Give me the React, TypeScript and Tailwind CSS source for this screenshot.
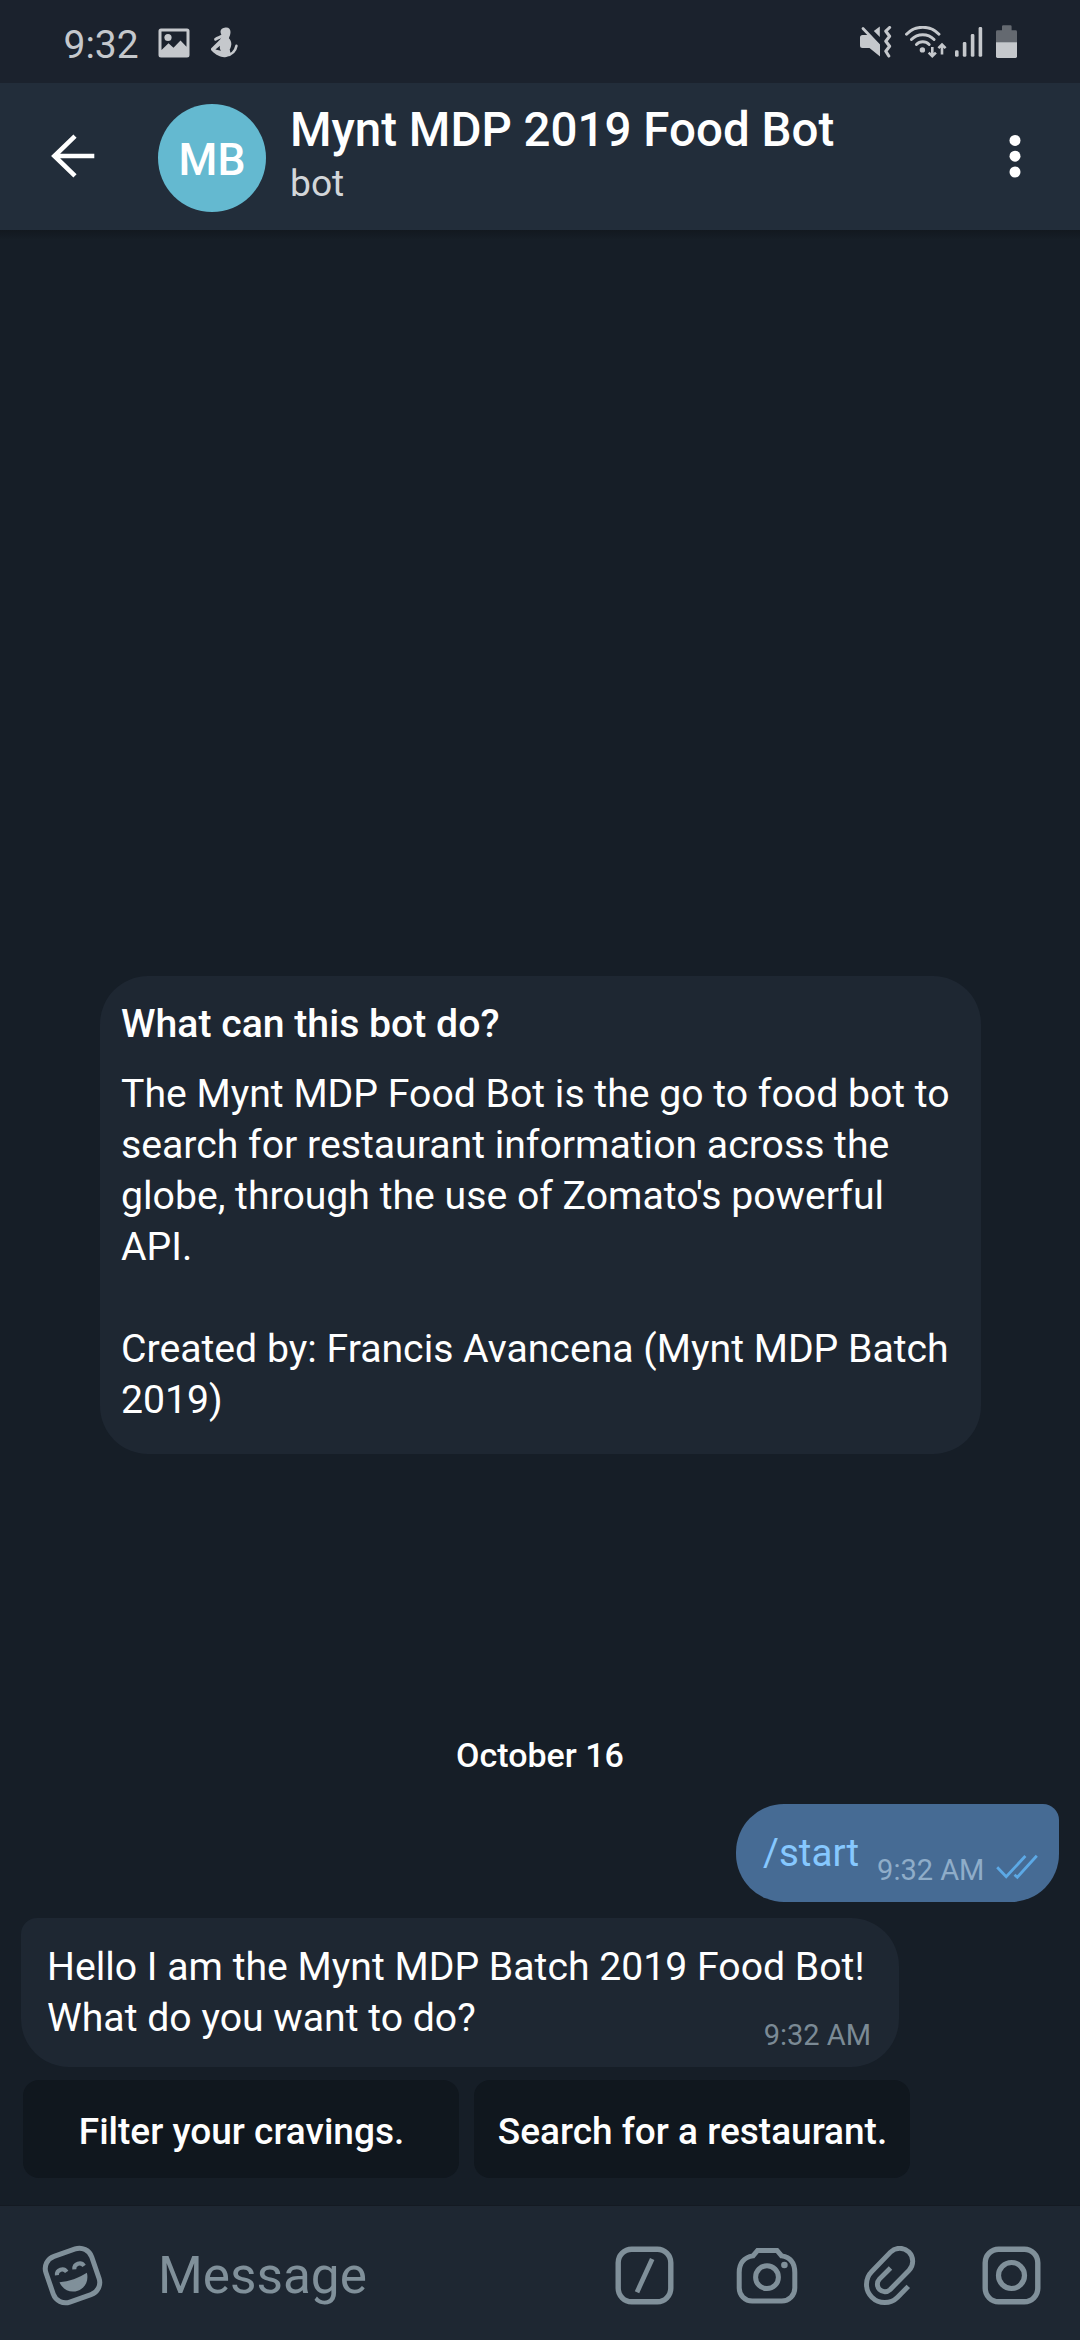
import type { ReactNode } from "react";

const INTRO = `The Mynt MDP Food Bot is the go to food bot to
search for restaurant information across the
globe, through the use of Zomato's powerful
API.

Created by: Francis Avancena (Mynt MDP Batch
2019)`;

type IconProps = { w: number; h: number; className?: string; children: ReactNode };

function Icon({ w, h, className = "", children }: IconProps) {
  return (
    <svg width={w} height={h} viewBox={`0 0 ${w} ${h}`} fill="none" className={`block shrink-0 ${className}`}>
      {children}
    </svg>
  );
}

function StatusBar() {
  return (
    <div className="flex h-[83px] items-center bg-[#1b222d] pl-[63.5px] pr-[62px] pt-0.5 text-[#c5c8cc]">
      <span className="pt-1 text-[39px] leading-[46px]">9:32</span>
      {/* picture notification */}
      <Icon w={32} h={30} className="ml-[19px]">
        <path
          fillRule="evenodd"
          d="M3 0.5h26a2.5 2.5 0 0 1 2.5 2.5v24a2.5 2.5 0 0 1-2.5 2.5h-26a2.5 2.5 0 0 1-2.5-2.5v-24a2.5 2.5 0 0 1 2.5-2.5zM3.5 3.5v18.5l7-6.8 5 4.6 7-7.3 6 6.2v-15.2z"
          fill="currentColor"
        />
        <circle cx="10" cy="9.5" r="3.6" fill="currentColor" />
      </Icon>
      {/* seated figure notification */}
      <Icon w={28} h={32} className="ml-[21px]">
        <path
          d="M14.5 0.6c3.2-0.4 5 1.6 5 4.4 0 2.6-1 4.4-1.6 6.2 1.8 1.8 2.6 4 2.4 6.4-0.2 1.8-0.8 3.6-1.6 5l1 4.6-4.6 2.8c-3.6 0.8-9.2-0.6-14.6-6.4-0.8-0.9-0.8-1.8 0-2.6l8.6-8.4c0.4-1.6 1.8-2.8 3-3.2-1.6-1-2.6-2.6-2.6-4.8 0-2 2-3.8 5-4z"
          fill="currentColor"
        />
        <path d="M4.6 12.2c3-1.6 5.4-2.2 7-3.6" stroke="currentColor" strokeWidth="3" strokeLinecap="round" />
        <path d="M15 28.5c6-1 9.4-4.4 10.4-9.6" stroke="currentColor" strokeWidth="2.6" strokeLinecap="round" />
        <path d="M4.4 22.4l4.6-3.6c-0.6 2 0 3.8 1 5z" fill="#1b222d" />
      </Icon>
      <div className="flex-1" />
      {/* muted speaker with vibration */}
      <Icon w={33} h={33}>
        <path d="M2.5 9h6l11.5 10v11.6l-10.5-8.6h-7a2.5 2.5 0 0 1-2.5-2.5v-8a2.5 2.5 0 0 1 2.5-2.5z" fill="currentColor" />
        <path d="M3 2.5l15.6 16.4" stroke="currentColor" strokeWidth="2.8" strokeLinecap="round" />
        <path d="M19.8 0.4v10.7l-6-6z" fill="currentColor" />
        <path d="M29.6 1.5l-3.8 3.7 3.8 5-3.8 5 3.8 5-3.8 5 3 4.8" stroke="currentColor" strokeWidth="3.1" strokeLinejoin="round" strokeLinecap="round" />
      </Icon>
      {/* wireless signal with transfer arrows */}
      <Icon w={42} h={34} className="ml-3">
        <g stroke="currentColor" strokeWidth="2.9" strokeLinecap="round">
          <path d="M1.5 8.2a22.5 22.5 0 0 1 32.5 0" />
          <path d="M6.4 13.4a16 16 0 0 1 22.7 0" />
          <path d="M11.4 18.4a9 9 0 0 1 12.8 0" />
        </g>
        <circle cx="17.4" cy="23.9" r="2.7" fill="currentColor" />
        <path d="M27.3 21v9M23.7 26.6l3.6 3.6 3.6-3.6M37 28.4v-9M33.4 22.2l3.6-3.6 3.6 3.6" stroke="currentColor" strokeWidth="2.6" />
      </Icon>
      <Icon w={28} h={32} className="mb-px ml-2">
        <g fill="currentColor">
          <rect x="0" y="24.3" width="3.6" height="6.5" rx="1.4" />
          <rect x="7.8" y="16" width="3.6" height="14.8" rx="1.4" />
          <rect x="15.8" y="8" width="3.6" height="22.8" rx="1.4" />
          <rect x="23.6" y="1" width="3.6" height="29.8" rx="1.4" />
        </g>
      </Icon>
      <Icon w={22} h={34} className="mb-px ml-[13px]">
        <path d="M6 1.5a1.2 1.2 0 0 1 1.2-1.2h7.2a1.2 1.2 0 0 1 1.2 1.2v3.8h4a1.4 1.4 0 0 1 1.4 1.4v11h-21v-11a1.4 1.4 0 0 1 1.4-1.4h4.6z" fill="#646970" />
        <path d="M0 17.2h21v14.4a1.4 1.4 0 0 1-1.4 1.4h-18.2a1.4 1.4 0 0 1-1.4-1.4z" fill="currentColor" />
      </Icon>
    </div>
  );
}

function Header() {
  return (
    <header className="flex h-[147px] bg-[#222d3a] pl-[50px] text-white">
      <Icon w={46} h={46} className="mt-[50px]">
        <path d="M44.3 23h-40M25 3.2l-20.6 19.8 20.6 19.8" stroke="currentColor" strokeWidth="4.6" />
      </Icon>
      <div className="ml-[62px] mt-[21px] flex size-[108px] items-center justify-center rounded-full bg-[#64b9d0] pt-[5px] text-[44.4px] font-medium leading-none">
        MB
      </div>
      <div className="ml-6 mt-[19px] flex-1">
        <h1 className="text-[47.5px] font-medium leading-[56px]">Mynt MDP 2019 Food Bot</h1>
        <p className="mt-[3px] text-[37.2px] leading-[44px] text-[#d3d6d9]">bot</p>
      </div>
      <Icon w={12} h={44} className="mr-[59px] mt-[51px]">
        <g fill="currentColor">
          <circle cx="6" cy="6.4" r="5.5" />
          <circle cx="6" cy="22.2" r="5.5" />
          <circle cx="6" cy="38" r="5.5" />
        </g>
      </Icon>
    </header>
  );
}

function KeyboardButton({ children }: { children: ReactNode }) {
  return (
    <button className="flex h-[98px] w-[436px] items-center justify-center rounded-[16px] bg-[#10171e] pl-px pt-[6px] text-[37px] font-medium leading-[44px] text-white">
      {children}
    </button>
  );
}

function Composer() {
  return (
    <footer className="flex h-[135px] items-center border-t border-[#141a22] bg-[#1e2732] pl-[42px] pr-[39px] pt-[5px] text-[#80909a]">
      {/* sticker face */}
      <Icon w={61} h={61}>
        <g transform="rotate(-19 30.5 30.5)">
          <rect x="6.3" y="6.3" width="48.4" height="48.4" rx="13" stroke="currentColor" strokeWidth="5" />
          <path d="M15.8 25.2c1.4-5.4 9-5.4 10.4 0M34.2 25.2c1.4-5.4 9-5.4 10.4 0" stroke="currentColor" strokeWidth="4" />
          <path d="M16 32.6c9 2.4 20 2.4 29 0-0.8 8.6-6.8 14-14.5 14s-13.7-5.4-14.5-14z" fill="currentColor" />
        </g>
      </Icon>
      <span className="ml-[55px] flex-1 text-[51.3px] leading-[60px]">Message</span>
      <div className="flex items-center">
        {/* command */}
        <Icon w={59} h={59}>
          <rect x="3.2" y="3.2" width="52.6" height="52.6" rx="13.5" stroke="currentColor" strokeWidth="5.4" />
          <path d="M37.2 13l-15.2 33.2" stroke="currentColor" strokeWidth="4.8" />
        </Icon>
        {/* camera */}
        <Icon w={62} h={59} className="ml-[62px]">
          <path
            d="M3.2 26.5c0-9 4.6-15.2 13.8-16.6l4.6-5.4h19.4l4.6 5.4c9 1.4 13.2 7.6 13.2 16.6v15.5a13 13 0 0 1-13 13h-29.6a13 13 0 0 1-13-13z"
            stroke="currentColor"
            strokeWidth="5"
          />
          <circle cx="31" cy="31.2" r="11.4" stroke="currentColor" strokeWidth="5" />
          <circle cx="48.4" cy="19" r="3.3" fill="currentColor" />
        </Icon>
        {/* attachment */}
        <Icon w={52} h={60} className="ml-[66px]">
          <path
            d="M44.3 40.4L33.6 51.2A18.2 18.2 0 0 1 7.8 25.5L26.5 6.1A13 13 0 0 1 44.9 24.5L26 43.7A7.5 7.5 0 0 1 15.4 33.1L26.5 22"
            stroke="currentColor"
            strokeWidth="4.9"
          />
        </Icon>
        {/* video message */}
        <Icon w={59} h={59} className="ml-[66px]">
          <rect x="3.2" y="3.2" width="52.6" height="52.6" rx="13.5" stroke="currentColor" strokeWidth="5.4" />
          <circle cx="29.5" cy="29.5" r="13" stroke="currentColor" strokeWidth="5.2" />
        </Icon>
      </div>
    </footer>
  );
}

export default function App() {
  return (
    <div className="flex h-[2340px] w-[1080px] flex-col overflow-hidden bg-[#161e27] font-[Roboto,sans-serif]">
      <StatusBar />
      <Header />
      <main className="flex flex-1 flex-col">
        <div className="h-2.5 shrink-0 bg-linear-to-b from-[#12181f] to-[#161e27]" />

        <section className="ml-[100px] mt-[736px] h-[478px] w-[881px] rounded-[48px] bg-[#1e2732] pl-[21px] pt-[23px] text-[39.2px] leading-[51px] text-white">
          <h2 className="font-medium">What can this bot do?</h2>
          <p className="mt-[19px] whitespace-pre-line">{INTRO}</p>
        </section>

        <div className="mt-[281px] text-center text-[34px] font-medium leading-10 text-white">October 16</div>

        <div className="mr-[21px] mt-[29px] flex h-[98px] w-[323px] items-end self-end rounded-[48px] rounded-tr-[16px] bg-[#466b94] pl-[27px]">
          <span className="mb-6 text-[38.6px] leading-[51px] text-[#86c8ff]">/start</span>
          <span className="mb-[15px] ml-[18px] text-[29px] leading-[34px] text-[#8fadc9]">9:32 AM</span>
          <Icon w={42} h={26} className="mb-[22px] ml-3">
            <path d="M1.2 13.2l9 9.4 19.2-20.6M18.5 20.8l2.8 2.4 19.5-21.4" stroke="#5ca9e6" strokeWidth="2.8" />
          </Icon>
        </div>

        <div className="relative ml-[21px] mt-4 h-[149px] w-[878px] rounded-[48px] rounded-tl-[16px] bg-[#1e2732] pl-[26px] pt-6 text-[39.2px] leading-[51px] text-white">
          <p>
            Hello I am the Mynt MDP Batch 2019 Food Bot!
            <br />
            What do you want to do?
          </p>
          <span className="absolute bottom-[15px] right-7 text-[29px] leading-[34px] text-[#7b8a95]">9:32 AM</span>
        </div>

        <div className="ml-[23px] mt-[13px] flex gap-[15px]">
          <KeyboardButton>Filter your cravings.</KeyboardButton>
          <KeyboardButton>Search for a restaurant.</KeyboardButton>
        </div>
      </main>
      <Composer />
    </div>
  );
}
